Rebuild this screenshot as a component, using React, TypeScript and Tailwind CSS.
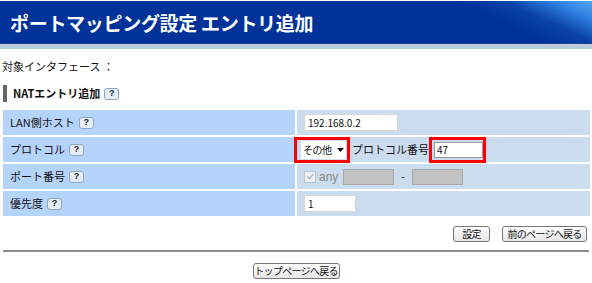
const FONT = "font-['Meiryo','Noto_Sans_CJK_JP',sans-serif]";

function Help() {
  return (
    <span className="inline-flex items-center justify-center w-[15px] h-[12px] ml-[4px] rounded-[3px] border border-[#8ea6c4] bg-[#e4edf8] text-[9px] font-bold text-[#222] leading-none font-['Liberation_Sans',sans-serif]">
      ?
    </span>
  );
}

function Btn({ label, className = "" }: { label: string; className?: string }) {
  return (
    <button
      className={`h-[16px] px-0 rounded-[3px] border border-[#777] bg-[linear-gradient(#fdfdfd,#e6e6e6)] text-[10px] tracking-[-0.7px] leading-none whitespace-nowrap text-[#111] flex items-center justify-center ${className}`}
    >
      {label}
    </button>
  );
}

function Label({ text }: { text: string }) {
  return (
    <div className="bg-[#b5d4fb] flex items-center pl-[7px] text-[11px] text-[#111]">
      {text}
      <Help />
    </div>
  );
}

export default function App() {
  return (
    <div className={`w-[592px] h-[283px] bg-white overflow-hidden ${FONT}`}>
      {/* Header */}
      <div className="mt-[1px] h-[43px] flex items-center pl-[10px] bg-[linear-gradient(205deg,#56a6f4_0%,#2f7fe0_6%,#0b42a6_13%,#00329a_20%)] border-b border-[#1f3f8f]">
        <h1 className="text-[19px] font-bold text-white tracking-[-0.3px] leading-none">
          ポートマッピング設定 エントリ追加
        </h1>
      </div>
      <div className="h-[5px] bg-[#b8ccda]" />

      <div className="mt-[9px] pl-[2px] text-[11px] text-[#111] leading-[16px]">対象インタフェース ：</div>

      {/* Section heading */}
      <div className="mt-[11px] ml-[3px] flex items-center h-[17px]">
        <span className="w-[4px] h-[17px] bg-[#666]" />
        <span className="ml-[6px] text-[11px] font-bold text-[#111]">NATエントリ追加</span>
        <Help />
      </div>

      {/* Form table */}
      <div className="mt-[8px] mx-[3px] w-[587px] grid grid-cols-[292px_1fr] gap-[2px] auto-rows-[25px]">
        <Label text="LAN側ホスト" />
        <div className="bg-[#cbdcee] flex items-center pl-[7px]">
          <input
            readOnly
            value="192.168.0.2"
            className="w-[94px] h-[17px] bg-white border border-[#d6d6d6] px-[3px] text-[10px] text-[#111] outline-none"
          />
        </div>

        <Label text="プロトコル" />
        <div className="bg-[#cbdcee] flex items-center">
          <div className="ml-[-3px] h-[26px] w-[56px] border-[3px] border-[#ff0000] flex items-center pl-[4px]">
            <div className="w-[45px] h-[18px] bg-white flex items-center justify-between pl-[2px] pr-[2px] text-[10px] tracking-[-0.5px] text-[#111]">
              <span>その他</span>
              <svg width="7" height="4" viewBox="0 0 7 4">
                <path d="M0 0h7L3.5 4z" fill="#111" />
              </svg>
            </div>
          </div>
          <span className="ml-[2px] text-[11px] text-[#111]">プロトコル番号</span>
          <div className="ml-[0px] h-[26px] w-[57px] border-[3px] border-[#ff0000] flex items-center pl-[2px]">
            <input
              readOnly
              value="47"
              className="w-[49px] h-[16px] bg-white border border-[#999] px-[2px] text-[10px] text-[#111] outline-none"
            />
          </div>
        </div>

        <Label text="ポート番号" />
        <div className="bg-[#cbdcee] flex items-center pl-[7px] text-[11px]">
          <span className="w-[12px] h-[12px] border border-[#b9c4cf] bg-[#eef2f6] flex items-center justify-center">
            <svg width="9" height="9" viewBox="0 0 9 9">
              <path d="M1.5 4.5l2 2.2L7.5 1.8" stroke="#a9b4bf" strokeWidth="1.3" fill="none" />
            </svg>
          </span>
          <span className="ml-[3px] text-[#888] font-['Liberation_Sans',sans-serif] text-[12px]">any</span>
          <span className="ml-[5px] w-[51px] h-[16px] bg-[#c2c2c2] border border-[#a8a8a8]" />
          <span className="mx-[7px] text-[#333] font-['Liberation_Sans',sans-serif]">-</span>
          <span className="w-[51px] h-[16px] bg-[#c2c2c2] border border-[#a8a8a8]" />
        </div>

        <Label text="優先度" />
        <div className="bg-[#cbdcee] flex items-center pl-[7px]">
          <input
            readOnly
            value="1"
            className="w-[52px] h-[17px] bg-white border border-[#d6d6d6] px-[3px] text-[10px] text-[#111] outline-none"
          />
        </div>
      </div>

      {/* Actions */}
      <div className="mt-[10px] pr-[5px] flex justify-end gap-[12px]">
        <Btn label="設定" className="w-[37px]" />
        <Btn label="前のページへ戻る" className="w-[85px]" />
      </div>

      <div className="mt-[8px] mx-[3px] h-[2px] bg-[#8c8c8c]" />

      <div className="mt-[11px] flex justify-center">
        <Btn label="トップページへ戻る" className="w-[87px]" />
      </div>
    </div>
  );
}
